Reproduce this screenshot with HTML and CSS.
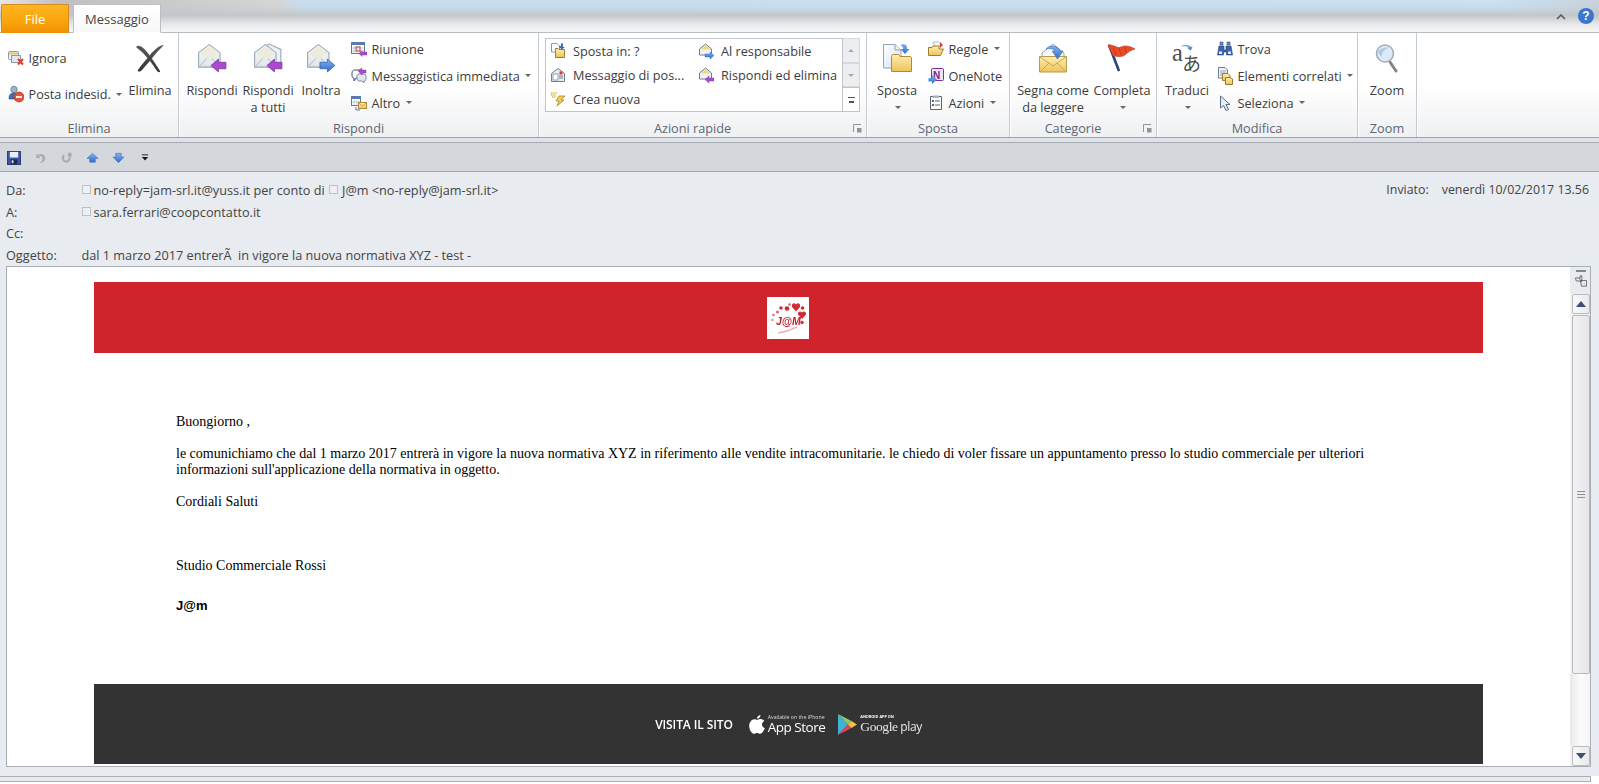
FILE: index.html
```html
<!DOCTYPE html>
<html lang="it">
<head>
<meta charset="utf-8">
<title>Messaggio</title>
<link rel="stylesheet" href="styles.css">
</head>
<body>
<svg class="sprite" xmlns="http://www.w3.org/2000/svg">
  <defs>
    <linearGradient id="gEnv" x1="0" y1="0" x2="0" y2="1"><stop offset="0" stop-color="#fbfbf6"/><stop offset="1" stop-color="#dfe5ec"/></linearGradient>
    <linearGradient id="gYel" x1="0" y1="0" x2="0" y2="1"><stop offset="0" stop-color="#fdeeb0"/><stop offset="1" stop-color="#efc35c"/></linearGradient>
    <linearGradient id="gPage" x1="0" y1="0" x2="1" y2="1"><stop offset="0" stop-color="#fff"/><stop offset="1" stop-color="#d5e0ee"/></linearGradient>
    <linearGradient id="gBlue" x1="0" y1="0" x2="0" y2="1"><stop offset="0" stop-color="#7fb4ef"/><stop offset="1" stop-color="#2f6cc9"/></linearGradient>
    <linearGradient id="gX" x1="0" y1="0" x2="0" y2="1"><stop offset="0" stop-color="#5a5a5a"/><stop offset="1" stop-color="#333"/></linearGradient>
  </defs>
  <symbol id="env" viewBox="0 0 28 28">
    <path d="M1.5 9 11.5 1.5 21.5 9V22.5H1.5Z" fill="url(#gEnv)" stroke="#97a6b6"/>
    <path d="M2.5 9.5 11.5 3 20.5 9.5 11.5 16Z" fill="#ecebdd"/>
    <path d="M2 22 9 14.5M21 22 14 14.5" stroke="#bcc6d1" fill="none"/>
  </symbol>
  <symbol id="reply" viewBox="0 0 28 28">
    <use href="#env" width="28" height="28"/>
    <path d="M13 21 20 15V18H27V24H20V27Z" fill="#a94bcb" stroke="#7b2f9a" stroke-width=".7"/>
  </symbol>
  <symbol id="replyall" viewBox="0 0 28 28">
    <path d="M8 5 15 1 26 6V20H20" fill="#eef2f6" stroke="#97a6b6"/>
    <use href="#env" width="28" height="28"/>
    <path d="M13 21 20 15V18H27V24H20V27Z" fill="#a94bcb" stroke="#7b2f9a" stroke-width=".7"/>
  </symbol>
  <symbol id="forward" viewBox="0 0 28 28">
    <use href="#env" width="28" height="28"/>
    <path d="M13 18H20V15L27 21 20 27V24H13Z" fill="url(#gBlue)" stroke="#2a5fb0" stroke-width=".7"/>
  </symbol>
  <symbol id="del" viewBox="0 0 30 30">
    <path d="M1 4C4 1 8 4 12 9 17 15 21 22 25 28 26 29.500 23 29.500 22 28 17 20 12 14 8 10 6 8 3 6 1 4Z" fill="url(#gX)"/>
    <path d="M29 2C25 2 20 6 15 12 11 17 6 22 3 27 2 29 5 29 7 27 11 22 15 18 18 14 21 10 25 6 29 2Z" fill="url(#gX)"/>
  </symbol>
  <symbol id="ignore" viewBox="0 0 16 16">
    <rect x=".5" y="1.5" width="10" height="8" rx="1" fill="#eef3f8" stroke="#8b9bab"/>
    <path d="M1 2.5H10V4.5H1Z" fill="#e9c765"/>
    <rect x="3.5" y="5.5" width="9" height="7" fill="#dfe7f0" stroke="#8b9bab"/>
    <path d="M10 9 15 14.5M15 9 10 14.5" stroke="#d9402c" stroke-width="2"/>
  </symbol>
  <symbol id="junk" viewBox="0 0 16 18">
    <circle cx="6" cy="4.5" r="3.2" fill="#9db4cf" stroke="#5a6f8c" stroke-width=".7"/>
    <path d="M1 14C1 9 3 8 6 8 9 8 11 10 11 14Z" fill="#3f6fb4" stroke="#2d4f85" stroke-width=".6"/>
    <circle cx="11" cy="12" r="5" fill="#e2553a" stroke="#a93520" stroke-width=".7"/>
    <path d="M8 12H14" stroke="#fff" stroke-width="1.8"/>
  </symbol>
  <symbol id="meeting" viewBox="0 0 16 16">
    <rect x=".5" y="1.5" width="13" height="11" fill="#fff" stroke="#5b7bb0"/>
    <path d="M1 2H13V4H1Z" fill="#5b7bb0"/>
    <path d="M3 5V12M6 5V12M9 5V12M1 7H13M1 10H13" stroke="#a9bad4" stroke-width=".7"/>
    <rect x="5" y="6" width="4" height="4" fill="none" stroke="#d8402c"/>
    <path d="M8 12.500 11 9.500V11H16V14H11V15.500Z" fill="#a94bcb" stroke="#7b2f9a" stroke-width=".4"/>
  </symbol>
  <symbol id="im" viewBox="0 0 16 16">
    <path d="M1 5C1 3 2 2 4 2H8C10 2 11 3 11 5V7C11 9 10 10 8 10H5L3 13V10C1.500 10 1 9 1 7Z" fill="#fff" stroke="#44536a"/>
    <path d="M6 8C6 6.500 7 6 8 6H13C14.500 6 15 7 15 8V11C15 12 14.500 13 13 13V15L11 13H8C7 13 6 12 6 11Z" fill="#dfe6ef" stroke="#7d8ea5"/>
    <path d="M7 3 11 0V2H15V5H11V7Z" fill="#a94bcb" stroke="#7b2f9a" stroke-width=".4"/>
  </symbol>
  <symbol id="more" viewBox="0 0 16 16">
    <rect x=".5" y="1.500" width="9" height="9" fill="#fff" stroke="#5b7bb0"/>
    <path d="M1 2H9V4H1Z" fill="#5b7bb0"/>
    <path d="M3 5V10M6 5V10M1 7H9" stroke="#a9bad4" stroke-width=".7"/>
    <rect x="7.500" y="7.500" width="8" height="6" fill="url(#gYel)" stroke="#b08a3a"/>
    <path d="M8 8 11.500 11 15 8" fill="none" stroke="#b08a3a" stroke-width=".7"/>
    <path d="M5 12V15H9" fill="none" stroke="#4a78c2"/>
  </symbol>
  <symbol id="moveto" viewBox="0 0 16 16">
    <path d="M1.500 .5H7L9.500 3V9H1.500Z" fill="#fff" stroke="#8b9bab"/>
    <path d="M5.500 5.500H8L9 6.500H14.500V14.500H5.500Z" fill="url(#gYel)" stroke="#9e7d2e"/>
    <path d="M11 .5V3H9V4L12 6.500 15 4H13V.5Z" fill="#3f6fb4"/>
  </symbol>
  <symbol id="mail" viewBox="0 0 16 16">
    <path d="M1.500 6.500 8 1.500 14.500 6.500V14.500H1.500Z" fill="#e8edf3" stroke="#6d7f95"/>
    <rect x="3" y="7" width="5" height="6" fill="#fff" stroke="#6d7f95" stroke-width=".7"/>
    <rect x="9.500" y="4.500" width="3" height="3" fill="#d9402c"/>
    <path d="M9 9H13M9 11H13" stroke="#6d7f95"/>
  </symbol>
  <symbol id="bolt" viewBox="0 0 16 16">
    <path d="M1 2H7M1 4H6M2 6H6" stroke="#e8b93a" stroke-width="1.600" stroke-dasharray="1.500 .7"/>
    <path d="M9 5H15L11 9H14L7 15 9 10H6Z" fill="#f4cd55" stroke="#a8842b" stroke-width=".8"/>
  </symbol>
  <symbol id="envblue" viewBox="0 0 16 16">
    <path d="M1.500 6 7.500 1 13.500 6V12H1.500Z" fill="#eef2f7" stroke="#6d7f95"/>
    <path d="M2 6.500 7.500 2.500 13 6.500Z" fill="#f3d77c"/>
    <path d="M7 11H12V9L16 12.500 12 16V14H7Z" fill="url(#gBlue)" stroke="#2a5fb0" stroke-width=".4"/>
  </symbol>
  <symbol id="envpurple" viewBox="0 0 16 16">
    <path d="M1.500 6 7.500 1 13.500 6V12H1.500Z" fill="#eef2f7" stroke="#6d7f95"/>
    <path d="M2 6.500 7.500 2.500 13 6.500Z" fill="#f3d77c"/>
    <path d="M7 12.500 11 9V11H16V14H11V16Z" fill="#a94bcb" stroke="#7b2f9a" stroke-width=".4"/>
  </symbol>
  <symbol id="move" viewBox="0 0 30 30">
    <path d="M1.500 1.500H13L19 7V25H1.500Z" fill="url(#gPage)" stroke="#93a3b5"/>
    <path d="M13 1.500V7H19" fill="#e8eef5" stroke="#93a3b5"/>
    <path d="M9.500 13.500C9.500 12 10 11.500 11.500 11.500H16C17 11.500 17.500 12.500 18 13.500H28C29 13.500 29.500 14 29.500 15V28.500H9.500Z" fill="url(#gYel)" stroke="#b1893a"/>
    <path d="M21 1C24 1 25 3 25 5V6H27.500L23 11 18.500 6H21V5C21 3.500 20 3 18 3Z" fill="url(#gBlue)"/>
  </symbol>
  <symbol id="rules" viewBox="0 0 16 16">
    <path d="M5 1.500 10 .5 13 4 8 6Z" fill="#fff" stroke="#8b9bab" stroke-width=".7"/>
    <path d="M12 1 15 4 12 7Z" fill="#d9402c"/>
    <path d="M.5 6.500H4L5 5H11V8H15.500L12.500 14.500H.5Z" fill="url(#gYel)" stroke="#9e7d2e"/>
  </symbol>
  <symbol id="actions" viewBox="0 0 16 16">
    <path d="M2.500 1.500H13.500V14.500H2.500Z" fill="#fff" stroke="#5c6470"/>
    <path d="M5 .5H11V3H5Z" fill="#aab4c0"/>
    <path d="M4 5H6V7H4ZM4 9H6V11H4Z" fill="#5c6470"/>
    <path d="M7 6H12M7 10H12" stroke="#5c6470"/>
  </symbol>
  <symbol id="unread" viewBox="0 0 30 30">
    <path d="M4 14V10L15 1 26 10V14" fill="#f1f4f8" stroke="#9aa7b6"/>
    <path d="M6 13 15 5 24 13Z" fill="#fff"/>
    <path d="M1.500 13.500H28.500V29H1.500Z" fill="url(#gYel)" stroke="#b99a4f"/>
    <path d="M2 14 15 23 28 14M2 29 11 20M28 29 19 20" fill="none" stroke="#caa95b"/>
    <path d="M8 6C12 1 21 3 22 8H25L19.500 16 14 8H17C16 6 12 5 8 6Z" fill="url(#gBlue)" stroke="#2a5fb0" stroke-width=".5"/>
  </symbol>
  <symbol id="flag" viewBox="0 0 30 30">
    <path d="M2 2 12 28" stroke="#28437a" stroke-width="2.600" fill="none"/>
    <path d="M1 2C6 1 10 6 14 4 18 2 23 3 28 6 24 7 21 9 18 12 13 15 9 13 6 13Z" fill="#e84a2a" stroke="#c2361c" stroke-width=".6"/>
    <path d="M6 4 9 12M12 5 14 12M18 4 19 10" stroke="#c2361c" stroke-width=".8"/>
  </symbol>
  <symbol id="find" viewBox="0 0 16 16">
    <path d="M3 1H6V4H3ZM10 1H13V4H10Z" fill="#6f8fc0" stroke="#2e4f8a" stroke-width=".6"/>
    <path d="M2 5H7V9H9V5H14L15.500 14H9.500V11H6.500V14H.5Z" fill="#3c64a8" stroke="#223f76" stroke-width=".6"/>
    <rect x="2" y="10.500" width="3" height="2.500" fill="#dfe8f5"/>
    <rect x="11" y="10.500" width="3" height="2.500" fill="#dfe8f5"/>
  </symbol>
  <symbol id="related" viewBox="0 0 16 18">
    <path d="M1.500 .5H8L10.500 3V11H1.500Z" fill="#eef3f9" stroke="#6d7f95"/>
    <path d="M3 4H9M3 6H9M3 8H9" stroke="#7b93b4" stroke-width=".8"/>
    <path d="M5.500 6.500H11L13 8.500V13.500H5.500Z" fill="url(#gYel)" stroke="#a07a2a"/>
    <path d="M8.500 10.500H13L15.500 12V17.500H8.500Z" fill="url(#gYel)" stroke="#a07a2a"/>
  </symbol>
  <symbol id="select" viewBox="0 0 16 16">
    <path d="M3.500 1V13L6.500 10.500 9 15.500 11.500 14.500 9 9.500H13Z" fill="#e6edf6" stroke="#5a6f8c"/>
  </symbol>
  <symbol id="zoom" viewBox="0 0 30 30">
    <path d="M18 19 24 28" stroke="#858585" stroke-width="3" stroke-linecap="round"/>
    <circle cx="13" cy="10.500" r="8.500" fill="#dce9f7" stroke="#a4afbb" stroke-width="1.600"/>
    <path d="M6 9C8 5.500 12 4 17 4.500 14 5.500 10 8 9.500 13.500 8 12.500 7 11 6 9Z" fill="#a9c7e8"/>
  </symbol>
  <symbol id="save" viewBox="0 0 15 15">
    <rect x=".5" y=".5" width="14" height="14" fill="#3b55a8" stroke="#27387a"/>
    <rect x="3" y="1" width="9" height="6" fill="#e9eef6"/>
    <rect x="4" y="9" width="7" height="5" fill="#22283c"/>
    <rect x="5" y="10" width="2" height="3" fill="#dfe4ec"/>
  </symbol>
  <symbol id="undo" viewBox="0 0 14 14">
    <path d="M2 2V7H7L5 5C8 4 10 6 9 9 8.500 11 7 12 6 13 10 13 13 10 12.500 6.500 12 3 8 1 4 3.500Z" fill="#a9adb3"/>
  </symbol>
  <symbol id="redo" viewBox="0 0 14 14">
    <path d="M9 1H13V6L11.500 4.500C12.500 8 11 12.500 7 12.500 3.500 12.500 1.500 10 1.500 7 1.500 5 2.500 3.500 4 2.500L5 5C4 5.500 4 7 4 7.500 4 9 5.500 10 7 10 9 10 9.800 6.500 9.500 4L8 5Z" fill="#a9adb3"/>
  </symbol>
  <symbol id="up" viewBox="0 0 14 12">
    <path d="M7 1 13 6.500H10V10.500H4V6.500H1Z" fill="url(#gBlue)" stroke="#2a5fb0" stroke-width=".5"/>
  </symbol>
  <symbol id="down" viewBox="0 0 14 12">
    <path d="M4 1H10V5H13L7 11 1 5H4Z" fill="url(#gBlue)" stroke="#2a5fb0" stroke-width=".5"/>
  </symbol>
  <symbol id="apple" viewBox="0 0 16 19">
    <path d="M11.500 0C11.600 1.900 10 3.800 8 3.800 7.800 2 9.500 .2 11.500 0ZM8.100 4.800C9 4.800 10.200 4 11.700 4 13.100 4 14.500 4.700 15.300 6 13.800 6.900 13 8 13 9.600 13 11.400 14.100 12.700 15.800 13.300 15.100 15.400 13 18.800 11.200 18.800 10 18.800 9.400 18 8 18 6.600 18 5.900 18.800 4.800 18.800 2.800 18.800 .2 14.800 .2 11 .2 7 2.800 4.200 5.300 4.200 6.500 4.200 7.300 4.800 8.100 4.800Z" fill="#fff"/>
  </symbol>
  <symbol id="play" viewBox="0 0 19 21">
    <path d="M0 0 10 10.500 0 21Z" fill="#3fb3d4"/>
    <path d="M0 0 13.500 7 10 10.500Z" fill="#8dc878"/>
    <path d="M0 21 13.500 14 10 10.500Z" fill="#d9455f"/>
    <path d="M13.500 7 19 10.500 13.500 14 10 10.500Z" fill="#f6c23c"/>
  </symbol>
</svg>

<div class="titlebar">
  <div class="tab tab-file">File</div>
  <div class="tab tab-msg">Messaggio</div>
  <div class="title-tools">
    <svg class="collapse" viewBox="0 0 10 7"><path d="M1 6 5 2 9 6" fill="none" stroke="#555" stroke-width="1.500"/></svg>
    <span class="help">?</span>
  </div>
</div>

<div class="ribbon">
  <section class="group g-elimina">
    <div class="gbody">
      <div class="col-small tall">
        <div class="small"><svg class="ic16"><use href="#ignore"/></svg><span>Ignora</span></div>
        <div class="small"><svg class="ic16 ic18"><use href="#junk"/></svg><span>Posta indesid.</span><i class="caret"></i></div>
      </div>
      <div class="big w44"><svg class="ic30"><use href="#del"/></svg><span>Elimina</span></div>
    </div>
    <div class="glabel">Elimina</div>
  </section>
  <section class="group g-rispondi">
    <div class="gbody">
      <div class="big w54"><svg class="ic30"><use href="#reply"/></svg><span>Rispondi</span></div>
      <div class="big w54"><svg class="ic30"><use href="#replyall"/></svg><span>Rispondi<br>a tutti</span></div>
      <div class="big w40 m-inoltra"><svg class="ic30"><use href="#forward"/></svg><span>Inoltra</span></div>
      <div class="col-small m-rsmall">
        <div class="small"><svg class="ic16"><use href="#meeting"/></svg><span>Riunione</span></div>
        <div class="small"><svg class="ic16"><use href="#im"/></svg><span>Messaggistica immediata</span><i class="caret"></i></div>
        <div class="small"><svg class="ic16"><use href="#more"/></svg><span>Altro</span><i class="caret"></i></div>
      </div>
    </div>
    <div class="glabel">Rispondi</div>
  </section>
  <section class="group g-azioni">
    <div class="gbody">
      <div class="gallery">
        <div class="qgrid">
          <div class="qitem"><svg class="ic16"><use href="#moveto"/></svg><span>Sposta in: ?</span></div>
          <div class="qitem"><svg class="ic16"><use href="#envblue"/></svg><span>Al responsabile</span></div>
          <div class="qitem"><svg class="ic16"><use href="#mail"/></svg><span>Messaggio di pos...</span></div>
          <div class="qitem"><svg class="ic16"><use href="#envpurple"/></svg><span>Rispondi ed elimina</span></div>
          <div class="qitem"><svg class="ic16"><use href="#bolt"/></svg><span>Crea nuova</span></div>
        </div>
      </div>
      <div class="gscroll">
        <div class="gbtn"><i class="tri-up"></i></div>
        <div class="gbtn"><i class="tri-down"></i></div>
        <div class="gbtn active"><i class="tri-more"></i></div>
      </div>
    </div>
    <div class="glabel has-launcher">Azioni rapide<svg class="launcher" viewBox="0 0 9 9"><path d="M.5 8V.5H8" fill="none" stroke="#8e949c"/><rect x="4" y="4" width="4.500" height="4.500" fill="#8e949c"/></svg></div>
  </section>
  <section class="group g-sposta">
    <div class="gbody">
      <div class="big w50"><svg class="ic30"><use href="#move"/></svg><span>Sposta</span><i class="caret big-caret"></i></div>
      <div class="col-small m-ssmall">
        <div class="small"><svg class="ic16"><use href="#rules"/></svg><span>Regole</span><i class="caret"></i></div>
        <div class="small">
          <svg class="ic16" viewBox="0 0 16 16"><rect x="3.500" y=".5" width="12" height="12" rx="1" fill="#efe3f4" stroke="#7d2f9a"/><text x="5" y="10.500" class="onenote-n">N</text><path d="M.5 10H4V7L9 11.500 4 16V13.500H.5Z" fill="url(#gBlue)"/></svg>
          <span>OneNote</span>
        </div>
        <div class="small"><svg class="ic16"><use href="#actions"/></svg><span>Azioni</span><i class="caret"></i></div>
      </div>
    </div>
    <div class="glabel">Sposta</div>
  </section>
  <section class="group g-categorie">
    <div class="gbody">
      <div class="big w76"><svg class="ic30"><use href="#unread"/></svg><span>Segna come<br>da leggere</span></div>
      <div class="big w58"><svg class="ic30"><use href="#flag"/></svg><span>Completa</span><i class="caret big-caret"></i></div>
    </div>
    <div class="glabel has-launcher">Categorie<svg class="launcher" viewBox="0 0 9 9"><path d="M.5 8V.5H8" fill="none" stroke="#8e949c"/><rect x="4" y="4" width="4.500" height="4.500" fill="#8e949c"/></svg></div>
  </section>
  <section class="group g-modifica">
    <div class="gbody">
      <div class="big w44">
        <svg class="ic30 tr-icon" viewBox="0 0 32 32"><text x="0" y="19" class="tr-a">a</text><text x="11" y="30" class="tr-b">あ</text><path d="M9 4C12 1 17 1 20 4H22L20 8 16 5H18C16 3.500 13 3 9 4Z" fill="url(#gBlue)"/></svg>
        <span>Traduci</span><i class="caret big-caret"></i>
      </div>
      <div class="col-small m-msmall">
        <div class="small"><svg class="ic16"><use href="#find"/></svg><span>Trova</span></div>
        <div class="small"><svg class="ic16 ic18"><use href="#related"/></svg><span>Elementi correlati</span><i class="caret"></i></div>
        <div class="small"><svg class="ic16"><use href="#select"/></svg><span>Seleziona</span><i class="caret"></i></div>
      </div>
    </div>
    <div class="glabel">Modifica</div>
  </section>
  <section class="group g-zoom">
    <div class="gbody">
      <div class="big w58"><svg class="ic30"><use href="#zoom"/></svg><span>Zoom</span></div>
    </div>
    <div class="glabel">Zoom</div>
  </section>
</div>

<div class="band"></div>

<div class="qat">
  <svg class="q-save"><use href="#save"/></svg>
  <svg class="q-ic"><use href="#undo"/></svg>
  <svg class="q-ic"><use href="#redo"/></svg>
  <svg class="q-ic"><use href="#up"/></svg>
  <svg class="q-ic"><use href="#down"/></svg>
  <svg class="q-more" viewBox="0 0 9 7"><path d="M1 .5H8" stroke="#111"/><path d="M1 3H8L4.500 7Z" fill="#111"/></svg>
</div>

<div class="header">
  <div class="hrow">
    <div class="hlabel">Da:</div>
    <div class="hval"><i class="chk"></i>no-reply=jam-srl.it@yuss.it per conto di <i class="chk chk2"></i>J@m &lt;no-reply@jam-srl.it&gt;</div>
    <div class="hsent"><span>Inviato:</span><span>venerdì 10/02/2017 13.56</span></div>
  </div>
  <div class="hrow">
    <div class="hlabel">A:</div>
    <div class="hval"><i class="chk"></i>sara.ferrari@coopcontatto.it</div>
  </div>
  <div class="hrow">
    <div class="hlabel">Cc:</div>
  </div>
  <div class="hrow">
    <div class="hlabel">Oggetto:</div>
    <div class="hval">dal 1 marzo 2017 entrerÃ&nbsp; in vigore la nuova normativa XYZ - test -</div>
  </div>
</div>

<div class="msgbox">
  <div class="mail">
    <div class="banner">
      <svg class="logo" viewBox="0 0 42 42">
        <rect width="42" height="42" fill="#fff"/>
        <path d="M29 7.500C27.500 5 24 6.500 25 10L29 14.500 33 10C34 6.500 30.500 5 29 7.500Z" fill="#d42a33"/>
        <path d="M35 15.500C33.500 13.500 30.500 14.500 31 17.500L35 22 39 17.500C39.500 14.500 36.500 13.500 35 15.500Z" fill="#d42a33"/>
        <circle cx="14" cy="11" r="1.800" fill="#d42a33"/>
        <circle cx="20" cy="11.500" r="2.300" fill="#d42a33"/>
        <circle cx="22.500" cy="7.500" r="1.300" fill="#e0616a"/>
        <circle cx="10.500" cy="15" r="1.500" fill="#e0616a"/>
        <circle cx="6.500" cy="18" r="1.200" fill="#e0616a"/>
        <circle cx="5.500" cy="23" r="1" fill="#e0616a"/>
        <circle cx="35.500" cy="11" r="1.800" fill="#d42a33"/>
        <circle cx="35" cy="25.500" r="1.700" fill="#d42a33"/>
        <text x="9" y="28" class="logo-t">J@M</text>
        <path d="M11 36C18 35 24 33 30 30" stroke="#eeb4b8" stroke-width="1.500" fill="none"/>
      </svg>
    </div>
    <div class="copy">
      <p>Buongiorno ,</p>
      <p class="p2">le comunichiamo che dal 1 marzo 2017 entrerà in vigore la nuova normativa XYZ in riferimento alle vendite intracomunitarie. le chiedo di voler fissare un appuntamento presso lo studio commerciale per ulteriori informazioni sull'applicazione della normativa in oggetto.</p>
      <p class="p3">Cordiali Saluti</p>
      <p class="p4">Studio Commerciale Rossi</p>
      <p class="p5">J@m</p>
    </div>
    <div class="foot">
      <span class="visit">VISITA IL SITO</span>
      <svg class="apple"><use href="#apple"/></svg>
      <span class="store"><small>Available on the iPhone</small><b>App Store</b></span>
      <svg class="play"><use href="#play"/></svg>
      <span class="gplay"><small>ANDROID APP ON</small><span class="gline"><em>Google</em> play</span></span>
    </div>
  </div>
  <div class="vscroll">
    <div class="vtop">
      <i class="vdash"></i>
      <svg class="vic" viewBox="0 0 14 14"><path d="M.5 3.500H6V1H8V7H1.500ZM6.500 6.500H13.500V13H7.500Z" fill="#f2f2f2" stroke="#55585e"/><path d="M5 4 8 8M9 10H9.500M11 10H11.500" stroke="#55585e"/></svg>
    </div>
    <div class="vbtn"><i class="v-up"></i></div>
    <div class="vthumb"><i class="grip"></i></div>
    <div class="vtrack"></div>
    <div class="vbtn"><i class="v-down"></i></div>
  </div>
</div>
<div class="status"><div class="strip"></div></div>
</body>
</html>
```
FILE: styles.css
```css
* { box-sizing: border-box; }
html, body { margin: 0; height: 100%; overflow: hidden; background: #fff; }
body { font-family: "Open Sans", "Liberation Sans", sans-serif; font-size: 12.7px; color: #3c3c3c; }
.sprite { display: block; width: 0; height: 0; }
svg { display: block; flex: none; }

.titlebar {
  height: 33px; display: flex; align-items: flex-end; padding-left: 1px;
  background:
    linear-gradient(180deg, rgba(190,195,198,0) 0, rgba(190,195,198,.15) 22%, #c3c7ca 48%, #e9eaeb 78%, #f6f6f7 100%),
    linear-gradient(90deg, #e8e8e8 0, #c0c0c0 60px, #d6d6d6 280px, #c8dff1 300px, #c8e2f6 1500px, #c9d3db 1599px);
  border-bottom: 1px solid #b8bdc4;
}
.tab { height: 29px; display: flex; align-items: center; justify-content: center; font-size: 13px; }
.tab-file { width: 68px; margin-bottom: -1px; color: #fff; background: linear-gradient(180deg, #fdb521 0, #f9a40a 60%, #f18f02 100%); border: 1px solid #d98a1f; border-bottom: 0; border-radius: 2px 2px 0 0; }
.tab-msg { width: 88px; margin-left: 4px; margin-bottom: -1px; color: #444; background: linear-gradient(180deg, #fff 0, #f8f8f9 100%); border: 1px solid #babfc6; border-bottom-color: #fff; border-radius: 2px 2px 0 0; }
.title-tools { margin-left: auto; height: 32px; display: flex; align-items: center; gap: 12px; padding-right: 5px; }
.collapse { width: 10px; height: 7px; }
.help { width: 16px; height: 16px; border-radius: 50%; background: #3c76cf; color: #fff; font: bold 12px/16px "Liberation Sans", sans-serif; text-align: center; }

.ribbon { height: 105px; display: flex; background: linear-gradient(180deg, #fff 0, #fff 50%, #eff0f2 100%); border-bottom: 1px solid #9ea3ab; }
.group { display: flex; flex-direction: column; border-right: 1px solid #c5cad2; box-shadow: 1px 0 0 #fff; }
.g-elimina { width: 179px; }
.g-rispondi { width: 360px; }
.g-azioni { width: 328px; }
.g-sposta { width: 143px; }
.g-categorie { width: 147px; }
.g-modifica { width: 201px; }
.g-zoom { width: 59px; }
.gbody { height: 85px; display: flex; }
.glabel { position: relative; height: 19px; line-height: 20px; text-align: center; color: #5d6673; }
.has-launcher { padding-right: 20px; }
.launcher { position: absolute; right: 4px; top: 6px; width: 9px; height: 9px; }

.big { display: flex; flex-direction: column; align-items: center; padding-top: 10px; line-height: 17px; text-align: center; }
.big > span { margin-top: 9px; white-space: nowrap; }
.ic30 { width: 30px; height: 30px; }
.tr-icon { overflow: visible; }
.w40 { width: 40px; }
.w44 { width: 44px; }
.w50 { width: 50px; }
.w54 { width: 54px; }
.w58 { width: 58px; }
.w76 { width: 76px; }
.big-caret { margin: 7px 0 0; }

.col-small { display: flex; flex-direction: column; padding-top: 2px; }
.small { height: 27px; display: flex; align-items: center; gap: 4.5px; white-space: nowrap; }
.col-small.tall { padding-top: 7px; width: 120px; }
.tall .small { height: 36px; }
.ic16 { width: 16px; height: 16px; }
.ic18 { height: 18px; }
.caret { display: block; width: 0; height: 0; border: 3px solid transparent; border-top-color: #666; border-bottom: 0; margin-left: 1px; }

.g-elimina .gbody { padding-left: 8px; }
.g-rispondi .gbody { padding-left: 6px; gap: 2px; }
.m-inoltra { margin-left: 4px; }
.m-rsmall { margin-left: 8px; }
.g-azioni .gbody { padding: 5px 0 0 6px; }
.gallery { width: 298px; height: 74px; background: #fff; border: 1px solid #c0c5cc; }
.qgrid { display: grid; grid-template-columns: 148px 1fr; grid-auto-rows: 24px; padding-left: 4px; }
.qitem { display: flex; align-items: center; gap: 7px; white-space: nowrap; }
.gscroll { width: 17px; height: 74px; display: flex; flex-direction: column; }
.gbtn { flex: 1; display: flex; align-items: center; justify-content: center; background: #eceef0; border: 1px solid #d5d8dc; border-left: 0; }
.gbtn.active { background: #fff; border-color: #c0c5cc; }
.tri-up { border: 3px solid transparent; border-bottom-color: #a5a9af; border-top: 0; }
.tri-down { border: 3px solid transparent; border-top-color: #a5a9af; border-bottom: 0; }
.tri-more { width: 7px; height: 6px; border-top: 1px solid #555; background: linear-gradient(#555,#555) center 3px / 5px 2px no-repeat; }
.g-sposta .gbody { padding-left: 5px; }
.m-ssmall { margin-left: 6px; }
.g-categorie .gbody { padding-left: 5px; gap: 2px; }
.g-modifica .gbody { padding-left: 8px; }
.m-msmall { margin-left: 8px; }

.band { height: 5px; background: #dfe2e6; border-bottom: 1px solid #a5aab2; }
.qat { height: 28px; display: flex; align-items: center; gap: 13px; padding: 1px 0 0 7px; background: #d4d7dc; }
.q-save { width: 14px; height: 14px; }
.q-ic { width: 13px; height: 12px; }
.q-more { width: 8px; height: 7px; margin-left: 3px; }

.header { height: 95px; padding-top: 7px; background: #e8ebf0; border-top: 1px solid #a3a9b4; color: #444; }
.hrow { height: 21.7px; display: flex; align-items: center; padding: 0 10px 0 6px; white-space: nowrap; }
.hlabel { width: 75.5px; }
.hval { display: flex; align-items: center; white-space: pre; }
.chk { display: block; width: 9px; height: 9px; margin-right: 3px; background: #eef0f3; border: 1px solid #bcc0c7; }
.chk2 { margin-left: 1px; margin-right: 4px; }
.hsent { margin-left: auto; display: flex; gap: 13px; font-size: 12.4px; }

.msgbox { height: 501px; margin-right: 8px; padding-left: 6px; display: flex; background: #e8ebf0; box-shadow: 8px 0 0 #e8ebf0; position: relative; }
.msgbox::after { content: ""; position: absolute; left: 6px; right: 0; top: 0; bottom: 0; border: 1px solid #a9aeb9; pointer-events: none; }
.mail { flex: 1; background: #fff; padding: 16px 87px 0 88px; overflow: hidden; }
.banner { height: 71px; display: flex; align-items: center; justify-content: center; background: #d0232c; }
.logo { width: 42px; height: 42px; margin-right: 2px; filter: blur(.3px); }
.logo-t { font: italic bold 10.5px "Liberation Sans", sans-serif; fill: #c4202a; }
.copy { padding: 61px 0 0 82px; color: #000; font: 14px/16px "Liberation Serif", serif; width: 1290px; }
.copy p { margin: 0; }
.copy .p2 { margin-top: 16px; }
.copy .p3 { margin-top: 16px; }
.copy .p4 { margin-top: 48px; }
.copy .p5 { margin-top: 23px; font: bold 13px/17px "Liberation Sans", sans-serif; }
.foot { height: 80px; margin-top: 70px; background: #333; color: #fff; display: flex; align-items: center; justify-content: center; }
.foot > * { filter: blur(.3px); }
.visit { font: 600 12px "Open Sans", sans-serif; letter-spacing: -.1px; }
.apple { width: 16px; height: 19px; margin-left: 16px; }
.store { display: flex; flex-direction: column; margin-left: 3px; }
.store small { font-size: 5.2px; line-height: 6px; color: #ddd; }
.store b { font: 400 13.5px/14px "Open Sans", sans-serif; letter-spacing: -.5px; }
.play { width: 19px; height: 21px; margin-left: 13px; }
.gplay { display: flex; flex-direction: column; margin-left: 3px; }
.gplay small { font-size: 3.8px; line-height: 5px; font-weight: 700; }
.gline { font: 12px/15px "Open Sans", sans-serif; letter-spacing: -.4px; color: #e6e6e6; }
.gline em { font: 13.5px/15px "Liberation Serif", serif; }

.onenote-n { font: bold 10px "Liberation Sans", sans-serif; fill: #6c2a8c; }
.tr-a { font: 26px "Liberation Serif", serif; fill: #4d4d4d; }
.tr-b { font: 20px "Noto Sans CJK JP", sans-serif; fill: #4d4d4d; }

.vscroll { width: 21px; display: flex; flex-direction: column; padding-bottom: 1px; padding-top: 1px; background: #f4f4f4; }
.vtop { height: 27px; display: flex; flex-direction: column; align-items: center; gap: 3px; padding-top: 3px; background: #e8ebf0; }
.vdash { display: block; width: 10px; height: 2px; background: #84888f; }
.vic { width: 12px; height: 12px; }
.vbtn { height: 20px; margin: 0 1px 0 2px; display: flex; align-items: center; justify-content: center; background: linear-gradient(90deg, #fafafa, #e9e9e9); border: 1px solid #b8bbc1; border-radius: 2px; }
.v-up { border: 5px solid transparent; border-bottom: 6px solid #3f4d78; border-top: 0; }
.v-down { border: 5px solid transparent; border-top: 6px solid #3f4d78; border-bottom: 0; }
.vthumb { height: 359px; margin: 1px 1px 0 2px; display: flex; align-items: center; justify-content: center; background: linear-gradient(90deg, #f2f2f3, #e6e6e8); border: 1px solid #b5b8be; border-radius: 2px; }
.grip { display: block; width: 8px; height: 7px; background: repeating-linear-gradient(180deg, #8e9299 0 1px, transparent 1px 3px); }
.vtrack { flex: 1; background: linear-gradient(90deg, #e9e9e9, #fbfbfb 50%, #f4f4f4); }

.status { height: 17px; padding-top: 9px; background: linear-gradient(180deg, #e8ebf0 0 9px, #fff 9px); }
.strip { width: 1591px; height: 6px; background: #e8ebf0; border: 1px solid #a9aeb9; border-left: 0; }
```
